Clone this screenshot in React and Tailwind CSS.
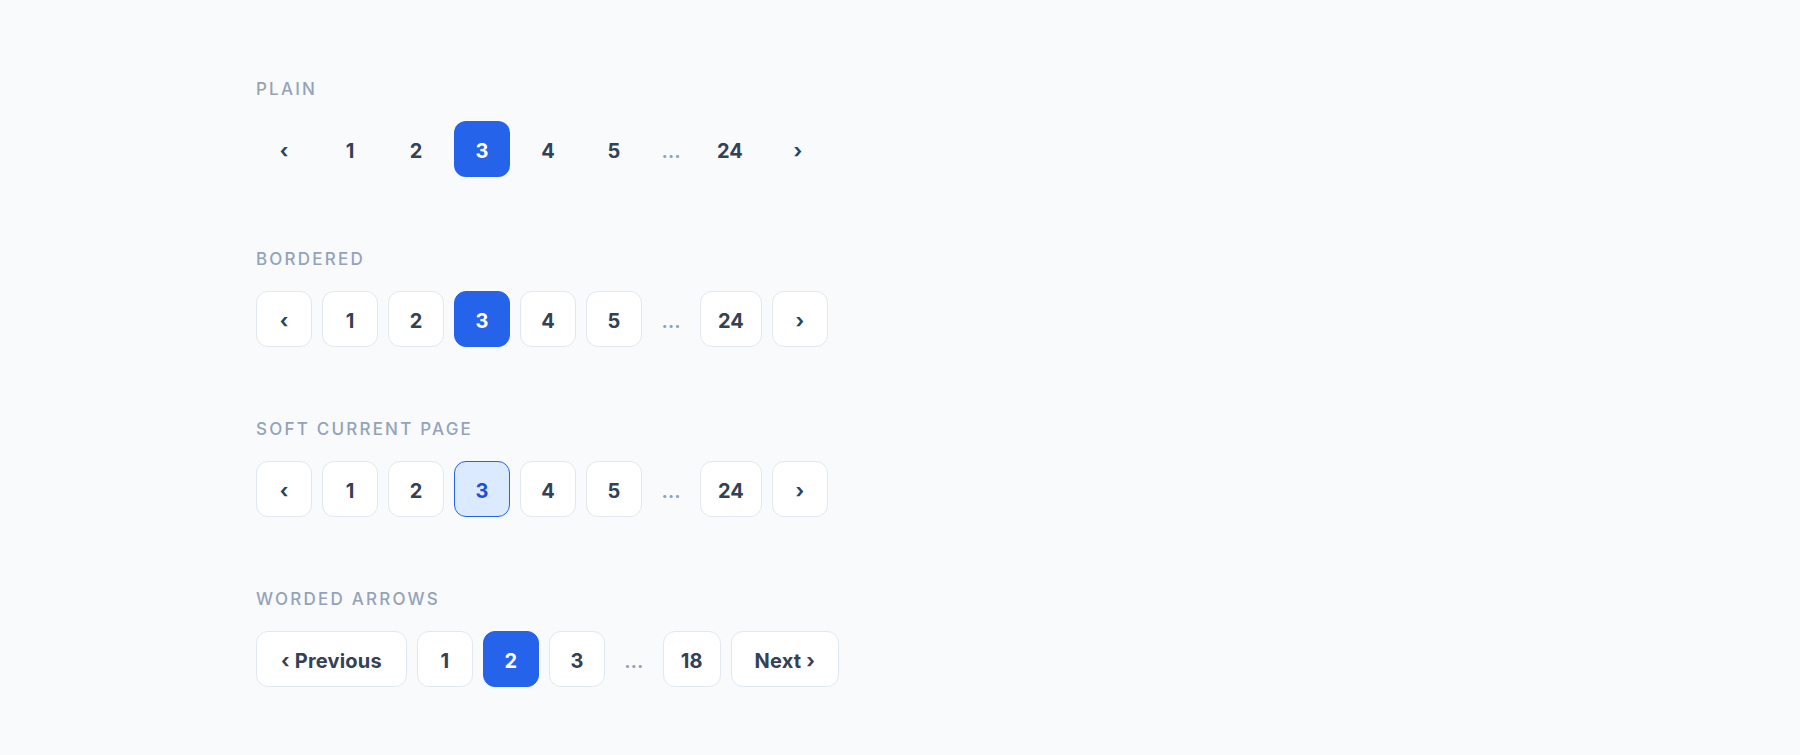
import React from "react";

const base =
  "h-14 min-w-14 px-[17px] pt-1 rounded-xl flex items-center justify-center text-[20px] font-bold leading-none";

function Ellipsis() {
  return (
    <span className="px-2 w-[38px] pt-1 flex items-center justify-center text-[20px] font-semibold text-[#94a3b8] self-center">
      …
    </span>
  );
}

function PageButton({ children, variant, current }) {
  let cls = base;
  if (variant === "plain") {
    cls += current ? " bg-[#2563eb] text-white" : " text-[#334155]";
  } else if (variant === "soft" && current) {
    cls += " bg-[#dbeafe] border border-[#2563eb] text-[#1d4ed8]";
  } else if (current) {
    cls += " bg-[#2563eb] border border-[#2563eb] text-white";
  } else {
    cls += " bg-white border border-[#e2e8f0] text-[#334155]";
  }
  return (
    <button type="button" className={cls}>
      {children}
    </button>
  );
}

function Section({ title, children }) {
  return (
    <section className="flex flex-col">
      <h2 className="text-[17px] leading-6 font-medium tracking-[0.13em] text-[#94a3b8] uppercase mb-5">
        {title}
      </h2>
      <nav className="flex items-center gap-[10px]">{children}</nav>
    </section>
  );
}

function Row({ variant }) {
  const pages = [1, 2, 3, 4, 5];
  return (
    <>
      <PageButton variant={variant}>‹</PageButton>
      {pages.map((p) => (
        <PageButton key={p} variant={variant} current={p === 3}>
          {p}
        </PageButton>
      ))}
      <Ellipsis />
      <PageButton variant={variant}>24</PageButton>
      <PageButton variant={variant}>›</PageButton>
    </>
  );
}

export default function App() {
  return (
    <div
      className="min-h-screen w-full bg-[#f8fafc] pl-[256px] pt-[77px] pb-10 flex flex-col gap-[70px]"
      style={{ fontFamily: "Inter, 'Noto Sans', sans-serif" }}
    >
      <Section title="Plain">
        <Row variant="plain" />
      </Section>
      <Section title="Bordered">
        <Row variant="bordered" />
      </Section>
      <Section title="Soft current page">
        <Row variant="soft" />
      </Section>
      <Section title="Worded arrows">
        <PageButton variant="bordered">
          <span className="px-[7px] tracking-[0.01em]">‹ Previous</span>
        </PageButton>
        <PageButton variant="bordered">1</PageButton>
        <PageButton variant="bordered" current>
          2
        </PageButton>
        <PageButton variant="bordered">3</PageButton>
        <Ellipsis />
        <PageButton variant="bordered">18</PageButton>
        <PageButton variant="bordered">
          <span className="px-[6px] tracking-[0.01em]">Next ›</span>
        </PageButton>
      </Section>
    </div>
  );
}
